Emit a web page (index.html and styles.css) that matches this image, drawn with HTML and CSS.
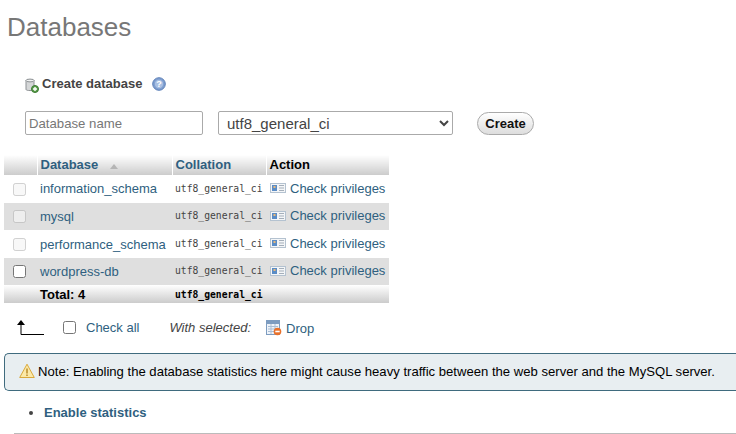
FILE: index.html
```html
<!DOCTYPE html>
<html lang="en">
<head>
    <meta charset="UTF-8">
    <title>Databases</title>
    <link rel="stylesheet" href="styles.css">
</head>
<body>
    <h2 class="page-title">Databases</h2>

    <form class="create-form">
        <div class="create-title">
            <svg class="icon-db" width="16" height="16" viewBox="0 0 16 16">
                <path d="M2 3.5c0-1.4 8-1.4 8 0v9c0 1.4-8 1.4-8 0z" fill="#d5d7d8" stroke="#8d9194"/>
                <ellipse cx="6" cy="3.5" rx="4" ry="1.4" fill="#f1f2f2" stroke="#8d9194"/>
                <circle cx="11" cy="12" r="3.5" fill="#5a9e4b" stroke="#3d7a33"/>
                <path d="M9 12h4M11 10v4" stroke="#fff" stroke-width="1.4"/>
            </svg>
            <span>Create database</span>
            <svg class="icon-help" width="14" height="14" viewBox="0 0 14 14">
                <circle cx="7" cy="7" r="6.3" fill="#7f9fd0" stroke="#5d80b8"/>
                <circle cx="7" cy="7" r="4.2" fill="#a9c0e2"/>
                <text x="7" y="10.3" class="help-mark">?</text>
            </svg>
        </div>
        <div class="create-fields">
            <input class="db-name" type="text" placeholder="Database name">
            <select class="db-collation">
                <option>utf8_general_ci</option>
            </select>
            <button class="create-btn" type="button">Create</button>
        </div>
    </form>

    <table class="db-table">
        <colgroup>
            <col class="col-check">
            <col class="col-name">
            <col class="col-collation">
            <col class="col-action">
        </colgroup>
        <thead>
            <tr>
                <th></th>
                <th><a href="#">Database</a> <span class="sort-arrow"></span></th>
                <th><a href="#">Collation</a></th>
                <th>Action</th>
            </tr>
        </thead>
        <tbody>
            <tr class="row-tall">
                <td class="cell-check"><input type="checkbox" disabled></td>
                <td class="cell-name"><a href="#">information_schema</a></td>
                <td class="mono">utf8_general_ci</td>
                <td class="cell-action"><a href="#"><svg class="icon-priv" width="16" height="16" viewBox="0 0 16 16"><rect x="0.5" y="3.5" width="15" height="9" fill="#f4f6f8" stroke="#b4c2d0"/><rect x="2" y="5" width="5" height="6" fill="#5a8cc6"/><rect x="3.5" y="6" width="2" height="2" fill="#e8b878"/><path d="M9 5.5h5M9 8h5M9 10.5h5" stroke="#a5afba"/></svg> Check privileges</a></td>
            </tr>
            <tr class="row-even">
                <td class="cell-check"><input type="checkbox" disabled></td>
                <td><a href="#">mysql</a></td>
                <td class="mono">utf8_general_ci</td>
                <td class="cell-action"><a href="#"><svg class="icon-priv" width="16" height="16" viewBox="0 0 16 16"><rect x="0.5" y="3.5" width="15" height="9" fill="#f4f6f8" stroke="#b4c2d0"/><rect x="2" y="5" width="5" height="6" fill="#5a8cc6"/><rect x="3.5" y="6" width="2" height="2" fill="#e8b878"/><path d="M9 5.5h5M9 8h5M9 10.5h5" stroke="#a5afba"/></svg> Check privileges</a></td>
            </tr>
            <tr class="row-tall">
                <td class="cell-check"><input type="checkbox" disabled></td>
                <td><a href="#">performance_schema</a></td>
                <td class="mono">utf8_general_ci</td>
                <td class="cell-action"><a href="#"><svg class="icon-priv" width="16" height="16" viewBox="0 0 16 16"><rect x="0.5" y="3.5" width="15" height="9" fill="#f4f6f8" stroke="#b4c2d0"/><rect x="2" y="5" width="5" height="6" fill="#5a8cc6"/><rect x="3.5" y="6" width="2" height="2" fill="#e8b878"/><path d="M9 5.5h5M9 8h5M9 10.5h5" stroke="#a5afba"/></svg> Check privileges</a></td>
            </tr>
            <tr class="row-even">
                <td class="cell-check"><input type="checkbox"></td>
                <td><a href="#">wordpress-db</a></td>
                <td class="mono">utf8_general_ci</td>
                <td class="cell-action"><a href="#"><svg class="icon-priv" width="16" height="16" viewBox="0 0 16 16"><rect x="0.5" y="3.5" width="15" height="9" fill="#f4f6f8" stroke="#b4c2d0"/><rect x="2" y="5" width="5" height="6" fill="#5a8cc6"/><rect x="3.5" y="6" width="2" height="2" fill="#e8b878"/><path d="M9 5.5h5M9 8h5M9 10.5h5" stroke="#a5afba"/></svg> Check privileges</a></td>
            </tr>
        </tbody>
        <tfoot>
            <tr>
                <th></th>
                <th>Total: 4</th>
                <th class="mono">utf8_general_ci</th>
                <th></th>
            </tr>
        </tfoot>
    </table>

    <div class="with-selected">
        <svg class="icon-arrow" width="28" height="15" viewBox="0 0 28 15">
            <path d="M5 0L9 5H1z" fill="#000"/>
            <path d="M5 4v10.5H28" fill="none" stroke="#000"/>
        </svg>
        <input class="check-all" type="checkbox">
        <a class="check-all-label" href="#">Check all</a>
        <em class="selected-label">With selected:</em>
        <a class="drop-link" href="#">
            <svg width="16" height="16" viewBox="0 0 16 16">
                <rect x="0.5" y="0.5" width="13" height="14" fill="#eef3f9" stroke="#7d9cc0"/>
                <rect x="1" y="1" width="12" height="3" fill="#7d9cc0"/>
                <path d="M2 6.5h10M2 9h10M2 11.5h10M5 4v10M9 4v10" stroke="#a9bdd4"/>
                <circle cx="11.5" cy="11.5" r="3.8" fill="#e8702a"/>
                <rect x="9.3" y="10.7" width="4.4" height="1.6" fill="#fff"/>
            </svg>
            <span>Drop</span>
        </a>
    </div>

    <div class="note">
        <svg class="icon-warn" width="16" height="16" viewBox="0 0 16 16">
            <path d="M8 1.2L15.3 14.5H.7z" fill="#fbe9a8" stroke="#d9a93c" stroke-linejoin="round"/>
            <path d="M8 5.5v5M8 11.5v1.6" stroke="#b98a28" stroke-width="1.5"/>
        </svg>
        <span>Note: Enabling the database statistics here might cause heavy traffic between the web server and the MySQL server.</span>
    </div>

    <ul class="stats-list">
        <li><a href="#">Enable statistics</a></li>
    </ul>
    <hr class="rule">
</body>
</html>
```

FILE: styles.css
```css
html, body {
    height: 100%;
    overflow: hidden;
}
body {
    margin: 0;
    background-color: #fff;
    color: #444;
    font-family: "Liberation Sans", Arial, sans-serif;
    font-size: 13px;
}
a {
    color: #2f5f80;
    text-decoration: none;
}

.page-title {
    margin: 0;
    padding: 12px 0 0 7px;
    font-size: 26px;
    line-height: 30px;
    font-weight: normal;
    color: #777;
}

.create-form {
    padding: 33px 0 0 24px;
}
.create-title {
    display: flex;
    align-items: center;
    height: 16px;
    font-weight: bold;
}
.icon-db {
    margin-right: 2px;
    position: relative;
    top: 2px;
}
.icon-help {
    margin-left: 10px;
    position: relative;
    top: 1px;
}
.help-mark {
    font-size: 9px;
    font-weight: bold;
    fill: #fff;
    text-anchor: middle;
}
.create-fields {
    display: flex;
    align-items: center;
    padding: 20px 0 0 1px;
}
.db-name {
    box-sizing: border-box;
    width: 178px;
    height: 24px;
    padding: 0 3px;
    border: 1px solid #aaa;
    border-radius: 2px;
    font-family: inherit;
    font-size: 13.2px;
    color: #444;
}
.db-name::placeholder {
    color: #777;
}
.db-collation {
    box-sizing: border-box;
    width: 235px;
    height: 24px;
    margin-left: 15px;
    padding-left: 4px;
    border: 1px solid #aaa;
    border-radius: 2px;
    background-color: #fff;
    font-family: inherit;
    font-size: 15px;
    color: #444;
}
.create-btn {
    box-sizing: border-box;
    width: 57px;
    height: 23px;
    margin-left: 24px;
    padding: 0;
    border: 1px solid #aaa;
    border-radius: 12px;
    background: linear-gradient(#fff, #ddd);
    font-family: inherit;
    font-size: 13px;
    font-weight: bold;
    color: #111;
}

.db-table {
    table-layout: fixed;
    width: 385px;
    margin: 20px 0 0 4px;
    border-collapse: collapse;
}
.col-check { width: 33px; }
.col-name { width: 135px; }
.col-collation { width: 94px; }
.col-action { width: 123px; }

.db-table th {
    height: 18px;
    padding: 0 3px;
    background: linear-gradient(#fff, #ccc);
    border-left: 1px solid #fff;
    color: #000;
    font-size: 13px;
    font-weight: bold;
    text-align: left;
    white-space: nowrap;
}
.db-table th:first-child {
    border-left: 0;
}
.db-table thead th {
    height: 18px;
    padding-bottom: 2px;
}
.db-table thead a {
    color: #2f5f80;
}
.db-table tfoot th {
    border-left: 0;
}
.db-table td {
    height: 27px;
    padding: 0 3px;
    white-space: nowrap;
    color: #444;
}
.db-table .row-tall td {
    height: 28px;
}
.db-table td.mono,
.db-table td.cell-action,
.db-table td.cell-name,
.db-table td.cell-check {
    height: 25px;
    padding-bottom: 2px;
}
.db-table .row-tall td.mono,
.db-table .row-tall td.cell-action,
.db-table .row-tall td.cell-name,
.db-table .row-tall td.cell-check {
    height: 26px;
}
.row-even td {
    background-color: #dfdfdf;
}
.cell-check {
    text-align: center;
}
.cell-check input {
    margin: 0 2px 0 0;
    vertical-align: middle;
}
.db-table .mono {
    font-family: "DejaVu Sans Mono", monospace;
    font-size: 9.7px;
}
.sort-arrow {
    display: inline-block;
    width: 0;
    height: 0;
    margin-left: 8px;
    border-left: 4px solid transparent;
    border-right: 4px solid transparent;
    border-bottom: 5px solid #b5b5b5;
}
.cell-action a {
    display: flex;
    align-items: center;
}
.icon-priv {
    margin-left: 1px;
    margin-right: 4px;
}

.with-selected {
    display: flex;
    align-items: center;
    height: 16px;
    padding: 16px 0 0 16px;
}
.icon-arrow {
    flex: none;
}
.check-all {
    margin: 0 0 0 19px;
}
.check-all-label {
    margin-left: 10px;
}
.selected-label {
    margin-left: 30px;
    color: #444;
}
.drop-link {
    display: flex;
    align-items: center;
    margin-left: 15px;
    position: relative;
    top: 1px;
}
.drop-link span {
    margin-left: 4px;
}

.note {
    box-sizing: border-box;
    display: flex;
    align-items: center;
    height: 38px;
    margin: 18px 0 0 4px;
    padding: 0 0 2px 14px;
    border: 1px solid #3f6b7e;
    border-right: 0;
    border-radius: 5px 0 0 5px;
    background-color: #e8eef1;
    color: #000;
    font-size: 13.1px;
    white-space: nowrap;
}
.icon-warn {
    margin-right: 3px;
    flex: none;
}

.stats-list {
    margin: 14px 0 0;
    padding: 0 0 0 44px;
    line-height: 16px;
}
.stats-list a {
    font-weight: bold;
    color: #2f5f80;
}
.rule {
    margin: 12px 0 0 14px;
    border: 0;
    border-top: 1px solid #bbb;
}
```
